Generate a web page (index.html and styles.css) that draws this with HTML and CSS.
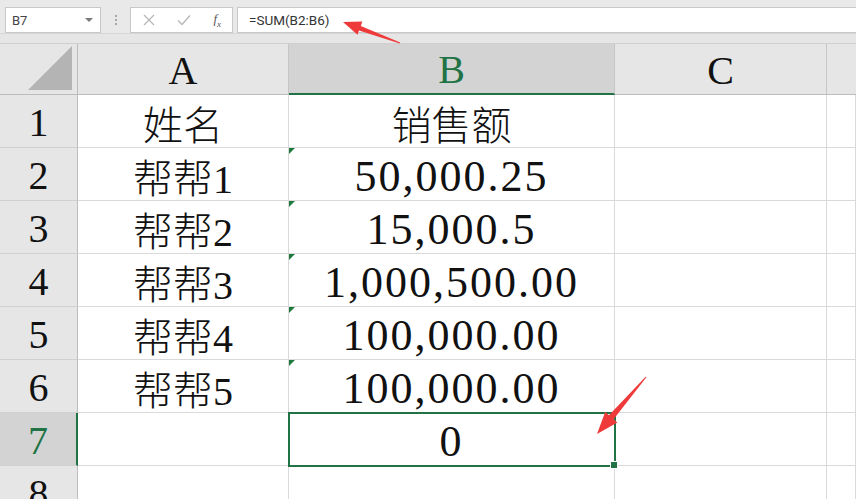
FILE: index.html
```html
<!DOCTYPE html>
<html lang="zh-CN">
<head>
<meta charset="utf-8">
<link rel="stylesheet" href="styles.css">
</head>
<body>
<div class="app">
  <div class="toolbar">
    <div class="namebox"><span>B7</span><span class="drop"></span></div>
    <div class="dots"><i></i><i></i><i></i></div>
    <div class="btns">
      <svg class="ico" width="12" height="12" viewBox="0 0 12 12"><path d="M1 1 L11 11 M11 1 L1 11" stroke="#b8b8b8" stroke-width="1.3" fill="none"/></svg>
      <svg class="ico" width="14" height="12" viewBox="0 0 14 12"><path d="M1 6.5 L5 10.5 L13 1.5" stroke="#b8b8b8" stroke-width="1.4" fill="none"/></svg>
      <span class="fx">f<sub>x</sub></span>
    </div>
    <div class="formula">=SUM(B2:B6)</div>
  </div>
  <div class="gap"></div>
  <div class="sheet">
    <div class="corner"><span class="tri"></span></div>
    <div class="ch">A</div>
    <div class="ch sel">B</div>
    <div class="ch">C</div>
    <div class="ch last"></div>

    <div class="rh">1</div>
    <div class="c">姓名</div>
    <div class="c">销售额</div>
    <div class="c"></div>
    <div class="c"></div>

    <div class="rh">2</div>
    <div class="c">帮帮1</div>
    <div class="c num flag">50,000.25</div>
    <div class="c"></div>
    <div class="c"></div>

    <div class="rh">3</div>
    <div class="c">帮帮2</div>
    <div class="c num flag">15,000.5</div>
    <div class="c"></div>
    <div class="c"></div>

    <div class="rh">4</div>
    <div class="c">帮帮3</div>
    <div class="c num flag">1,000,500.00</div>
    <div class="c"></div>
    <div class="c"></div>

    <div class="rh">5</div>
    <div class="c">帮帮4</div>
    <div class="c num flag">100,000.00</div>
    <div class="c"></div>
    <div class="c"></div>

    <div class="rh">6</div>
    <div class="c">帮帮5</div>
    <div class="c num flag">100,000.00</div>
    <div class="c"></div>
    <div class="c"></div>

    <div class="rh sel">7</div>
    <div class="c"></div>
    <div class="c num active">0</div>
    <div class="c"></div>
    <div class="c"></div>

    <div class="rh">8</div>
    <div class="c"></div>
    <div class="c"></div>
    <div class="c"></div>
    <div class="c"></div>
  </div>
  <svg class="arrows" width="856" height="499" viewBox="0 0 856 499">
    <polygon fill="#ee3a3a" points="343,22 362.3,21.6 360.8,25.9 400.2,42.5 399.8,43.5 359,30.5 357.5,34.8"/>
    <polygon fill="#ee3a3a" points="597,434 617.4,422.5 613.6,419.3 646.4,377.3 645.6,376.7 609,415.3 605.2,412.1"/>
  </svg>
</div>
</body>
</html>
```
FILE: styles.css
```css
* { box-sizing: border-box; }
html, body { margin: 0; padding: 0; }
body {
  width: 856px;
  height: 499px;
  overflow: hidden;
  background: #e6e6e6;
  font-family: "Liberation Serif", "Noto Sans CJK SC", serif;
}
.app { position: relative; width: 856px; height: 499px; overflow: hidden; }

.toolbar {
  height: 34px;
  display: flex;
  align-items: flex-start;
  padding: 7px 0 0 5px;
  background: #e9e9e9;
  border-bottom: 1px solid #d6d6d6;
}
.namebox {
  width: 96px;
  height: 26px;
  background: #fff;
  border: 1px solid #c8c8c8;
  display: flex;
  align-items: center;
  justify-content: space-between;
  padding: 0 7px 0 6px;
  font-family: "Roboto", "Liberation Sans", sans-serif;
  font-size: 13px;
  color: #444;
}
.drop {
  width: 0; height: 0;
  border-left: 4px solid transparent;
  border-right: 4px solid transparent;
  border-top: 4px solid #7a7a7a;
}
.dots {
  width: 29px;
  height: 26px;
  display: flex;
  flex-direction: column;
  align-items: center;
  justify-content: center;
  gap: 2px;
}
.dots i { width: 2px; height: 2px; background: #a8a8a8; display: block; }
.btns {
  width: 103px;
  height: 26px;
  background: #fff;
  border: 1px solid #c8c8c8;
  display: flex;
  align-items: center;
  justify-content: space-between;
  padding: 0 11px 0 12px;
}
.fx {
  font-family: "Liberation Serif", serif;
  font-style: italic;
  font-size: 13px;
  color: #555;
}
.fx sub { font-size: 9px; }
.formula {
  flex: 1;
  height: 26px;
  margin-left: 4px;
  background: #fff;
  border: 1px solid #c8c8c8;
  border-right: none;
  padding: 0 0 0 11px;
  display: flex;
  align-items: center;
  font-family: "Roboto", "Liberation Sans", sans-serif;
  font-size: 13.5px;
  color: #333;
}
.gap {
  height: 10px;
  background: #e6e6e6;
  border-bottom: 1px solid #cfcfcf;
}

.sheet {
  display: grid;
  grid-template-columns: 78px 211px 326px 212px 1fr;
  grid-template-rows: 51px repeat(8, 53px);
  background: #fff;
}
.corner {
  background: #e6e6e6;
  border-right: 1px solid #bcbcbc;
  border-bottom: 1px solid #bcbcbc;
  position: relative;
}
.tri {
  position: absolute;
  right: 5px;
  bottom: 4px;
  width: 0; height: 0;
  border-left: 44px solid transparent;
  border-bottom: 44px solid #b4b4b4;
}
.ch {
  background: #e6e6e6;
  border-right: 1px solid #c6c6c6;
  border-bottom: 1px solid #bcbcbc;
  display: flex;
  align-items: center;
  justify-content: center;
  font-size: 40px;
  color: #111;
  padding-top: 2px;
}
.ch.sel {
  background: #d3d3d3;
  color: #217346;
  border-bottom: 2px solid #217346;
}
.ch.last { border-right: none; }
.rh {
  background: #e6e6e6;
  border-right: 1px solid #bcbcbc;
  border-bottom: 1px solid #d0d0d0;
  display: flex;
  align-items: center;
  justify-content: center;
  font-size: 40px;
  color: #111;
  padding-top: 3px;
}
.rh.sel {
  background: #d3d3d3;
  color: #217346;
  border-right: 2px solid #217346;
}
.c {
  position: relative;
  border-right: 1px solid #d9d9d9;
  border-bottom: 1px solid #d9d9d9;
  display: flex;
  align-items: center;
  justify-content: center;
  font-size: 40px;
  font-weight: 300;
  color: #111;
  padding-top: 4px;
}
.num {
  font-size: 44px;
  font-weight: 400;
  letter-spacing: 2px;
  padding-top: 5px;
}
.flag::before {
  content: "";
  position: absolute;
  left: 0;
  top: 0;
  width: 0; height: 0;
  border-top: 6px solid #1e7a3c;
  border-right: 6px solid transparent;
}
.active {
  outline: 2px solid #217346;
  outline-offset: -1px;
  z-index: 1;
}
.active::after {
  content: "";
  position: absolute;
  right: -4px;
  bottom: -4px;
  width: 6px;
  height: 6px;
  background: #217346;
  border: 1px solid #fff;
}
.arrows {
  position: absolute;
  left: 0;
  top: 0;
  pointer-events: none;
  z-index: 5;
}
```
